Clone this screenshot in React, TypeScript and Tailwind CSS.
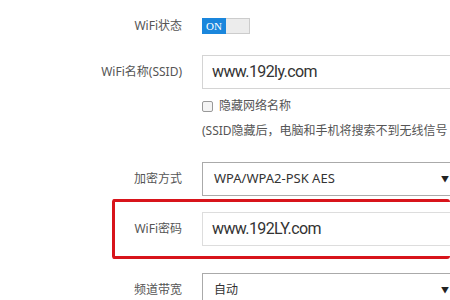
import React from 'react'

const font = { fontFamily: '"Noto Sans", "Noto Sans CJK SC", sans-serif' }
const inputFont = { fontFamily: 'Roboto, "Noto Sans CJK SC", sans-serif' }

function Label({ children, w = 'w-[182px]' }: { children: React.ReactNode; w?: string }) {
  return <div className={`${w} shrink-0 text-right text-xs text-[#555]`}>{children}</div>
}

export default function App() {
  return (
    <div className="h-[300px] w-[450px] overflow-hidden bg-white" style={font}>
      <div className="flex h-5 items-center gap-5 mt-[16px]">
        <Label>WiFi状态</Label>
        <div className="flex h-4 w-12 overflow-hidden">
          <div
            className="flex w-6 items-center justify-center bg-[#1a86dc] text-[11px] leading-none text-white"
            style={{ fontFamily: '"Liberation Serif", serif' }}
          >
            ON
          </div>
          <div className="w-6 border border-l-0 border-[#ccc] bg-[#ececec]" />
        </div>
      </div>

      <div className="mt-[19px] flex items-center gap-5">
        <Label>WiFi名称(SSID)</Label>
        <div
          className="flex h-[34px] flex-1 items-center border border-r-0 border-[#d4d4d4] pl-[9px] text-base tracking-[-0.6px] text-[#333]"
          style={inputFont}
        >
          www.192ly.com
        </div>
      </div>

      <div className="ml-[202px] mt-[7px] flex h-5 items-center gap-[6px] text-xs text-[#555]">
        <div className="h-[11px] w-[11px] rounded-[2px] border border-[#999] bg-[#f4f4f4]" />
        <span>隐藏网络名称</span>
      </div>

      <div className="ml-[202px] mt-[5px] flex h-5 items-center whitespace-nowrap text-xs text-[#555]">
        (SSID隐藏后，电脑和手机将搜索不到无线信号
      </div>

      <div className="mt-[21px] flex items-center gap-5">
        <Label>加密方式</Label>
        <div className="flex h-[34px] flex-1 items-center justify-between border border-r-0 border-[#aaa] pl-[11px] pr-[1px] text-[13px] text-[#333]">
          <span>WPA/WPA2-PSK AES</span>
          <span className="text-[8px] text-[#222]">▼</span>
        </div>
      </div>

      <div className="ml-[112px] mt-[3px] flex h-[60px] items-center gap-5 rounded-[3px] border-[3px] border-r-0 border-[#d8141b]">
        <Label w="w-[67px]">WiFi密码</Label>
        <div
          className="flex h-[34px] flex-1 items-center border border-r-0 border-[#ddd] pl-[9px] text-base tracking-[-0.6px] text-[#333]"
          style={inputFont}
        >
          www.192LY.com
        </div>
      </div>

      <div className="mt-[14px] flex items-center gap-5">
        <Label>频道带宽</Label>
        <div className="flex h-[34px] flex-1 items-center justify-between border border-r-0 border-[#aaa] pl-[11px] pr-[1px] text-xs text-[#333]">
          <span>自动</span>
          <span className="text-[8px] text-[#222]">▼</span>
        </div>
      </div>
    </div>
  )
}
